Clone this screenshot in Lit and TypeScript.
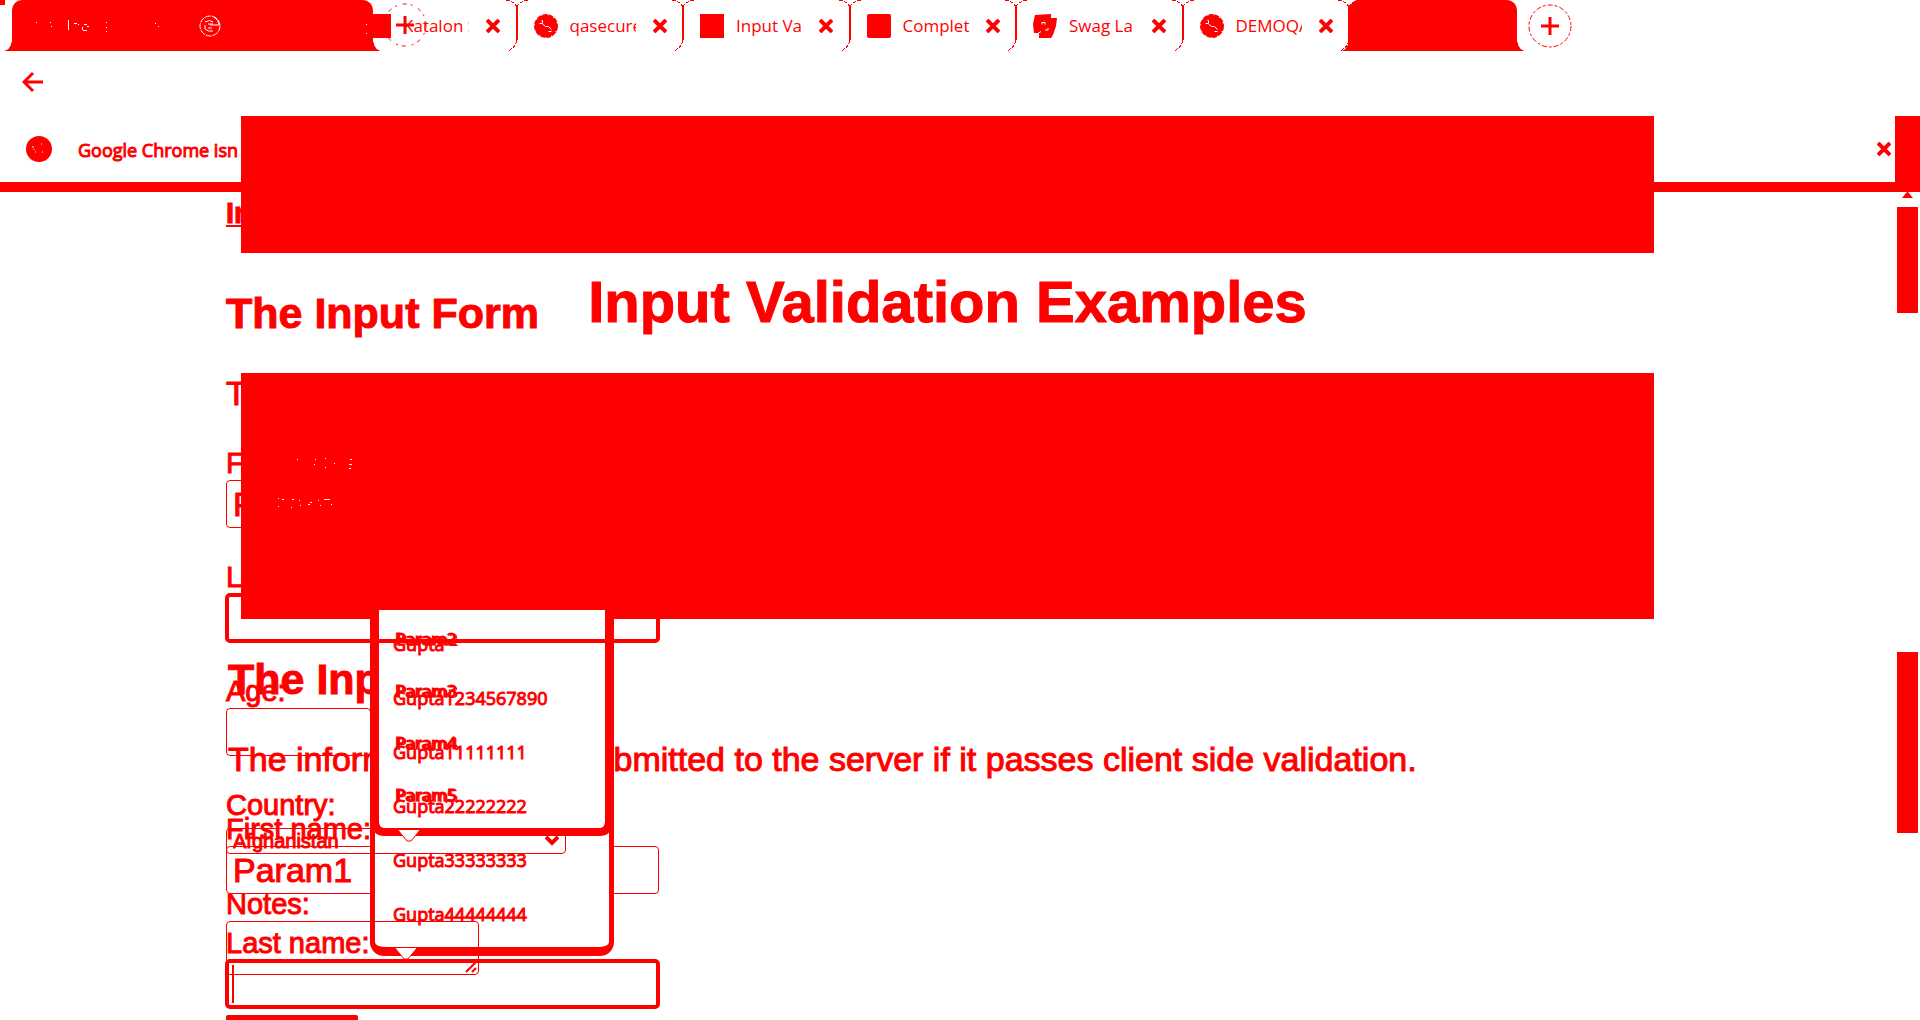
import { LitElement, html, css, svg } from "lit";
import { customElement, property } from "lit/decorators.js";

type TabIcon = "globe" | "square" | "round" | "swag";

const RED = "#ff0000";

const iconArt = (kind: TabIcon) => {
  switch (kind) {
    case "square":
      return svg`<rect width="24" height="24" fill=${RED} />`;
    case "round":
      return svg`<rect width="24" height="24" rx="2" fill=${RED} />`;
    case "swag":
      return svg`<path d="M2 1L18 0L18 4L24 4L23 12L20 21L18 24L6 24L6 19L1 19L0 10Z" fill=${RED} />
        <path d="M9 10.500v-2h3v2M15 14v2h-3M18.500 0v4M5 19.500l3-2" fill="none" stroke="#fff" />`;
    default:
      return svg`<circle cx="12" cy="12" r="11" fill=${RED} />
        <circle cx="12" cy="12" r="11" fill="none" stroke=${RED} stroke-width="2" stroke-dasharray="5 1" />
        <path d="M5.500 9.500h3v-3h-1M8.500 10l3 2.500h3l3 3M17.500 17.500h-3" fill="none" stroke="#fff" />`;
  }
};

const cross = html`<svg class="cross" viewBox="0 0 14 14" aria-hidden="true">
  <path d="M1 1L13 13M13 1L1 13" fill="none" stroke=${RED} stroke-width="4" />
</svg>`;

@customElement("browser-tab")
class BrowserTab extends LitElement {
  static styles = css`
    :host {
      position: relative;
      display: flex;
      flex: 1;
      align-items: center;
      min-width: 0;
      padding-left: 17px;
      box-sizing: border-box;
    }
    .icon {
      flex: none;
      width: 24px;
      height: 24px;
      margin-right: 12px;
      overflow: visible;
    }
    .title {
      flex: none;
      width: 66px;
      overflow: hidden;
      white-space: nowrap;
      margin-right: 17px;
    }
    .close {
      flex: none;
      display: flex;
      padding: 0;
      border: 0;
      background: none;
    }
    .cross {
      width: 14px;
      height: 14px;
    }
    .edge {
      position: absolute;
      right: -11px;
      top: 0;
      width: 22px;
      height: 51px;
    }
  `;

  @property() label = "";
  @property() icon: TabIcon = "globe";

  render() {
    return html`
      <svg class="icon" viewBox="0 0 24 24" aria-hidden="true">${iconArt(this.icon)}</svg>
      <span class="title">${this.label}</span>
      <button class="close" aria-label="Close tab">${cross}</button>
      <svg class="edge" viewBox="0 0 22 51" aria-hidden="true">
        <path d="M0 0Q8 1 11 7M11 40Q10 47 2 51M22 0Q14 1 11 7" fill="none" stroke=${RED}
          stroke-dasharray="4 1" shape-rendering="crispEdges" />
        <path d="M11 7V40" stroke=${RED} stroke-width="2" shape-rendering="crispEdges" />
      </svg>
    `;
  }
}

@customElement("app-root")
class AppRoot extends LitElement {
  static styles = css`
    :host {
      position: relative;
      display: flex;
      flex-direction: column;
      height: 100vh;
      overflow: hidden;
      background: #fff;
      color: #f00;
      font-family: "Liberation Sans", Arial, sans-serif;
      font-size: 29px;
    }
    .ui {
      font-family: "Open Sans", "Noto Sans", sans-serif;
    }
    .strip {
      display: flex;
      flex: none;
      height: 51px;
      font-size: 17px;
    }
    .solid {
      position: relative;
      flex: none;
      width: 168px;
      background: #f00;
      border-radius: 10px 10px 0 0;
    }
    .solid.wide {
      width: 361px;
      margin-left: 12px;
      margin-right: -23px;
    }
    .solid::before,
    .solid::after {
      content: "";
      position: absolute;
      bottom: 0;
      width: 8px;
      height: 12px;
    }
    .solid::before {
      right: 100%;
      background: radial-gradient(8px 12px at 0 0, transparent 96%, #f00 100%);
    }
    .solid::after {
      left: 100%;
      background: radial-gradient(8px 12px at 100% 0, transparent 96%, #f00 100%);
    }
    .specks {
      position: absolute;
      inset: 0;
      width: 361px;
      height: 51px;
    }
    .tabs {
      display: flex;
      width: 999px;
    }
    .add {
      display: flex;
      align-self: center;
      padding: 0;
      border: 0;
      background: none;
      margin-left: 11px;
    }
    .add.ghost {
      position: absolute;
      left: 383px;
      top: 3px;
      margin: 0;
    }
    .add svg {
      width: 44px;
      height: 44px;
    }
    .corner {
      position: absolute;
      left: 0;
      top: 0;
      width: 5px;
      height: 5px;
      background: #f00;
    }
    .toolbar {
      display: flex;
      flex: none;
      align-items: center;
      height: 62px;
      padding: 0 22px 3px;
    }
    .back,
    .dismiss {
      display: flex;
      padding: 0;
      border: 0;
      background: none;
    }
    .back svg {
      width: 22px;
      height: 22px;
    }
    .info {
      display: flex;
      flex: none;
      align-items: center;
      height: 66px;
      padding-left: 26px;
      border-bottom: 10px solid #f00;
      font-size: 18px;
      -webkit-text-stroke: 1px #f00;
    }
    .info .logo {
      width: 26px;
      height: 26px;
      margin-right: 26px;
    }
    .info .message {
      flex: 1;
      padding-top: 2px;
    }
    .info .cross {
      width: 14px;
      height: 14px;
      margin-right: 4px;
    }
    .endcap {
      align-self: stretch;
      width: 25px;
      background: #f00;
    }
    .page {
      display: grid;
      flex: 1;
      min-height: 0;
      overflow: hidden;
      padding-left: 226px;
      align-items: start;
    }
    .layer {
      grid-area: 1 / 1;
      display: flex;
      flex-direction: column;
      align-items: flex-start;
    }
    .front {
      position: relative;
      z-index: 2;
    }
    h1,
    h2,
    p {
      margin: 0;
    }
    h1,
    h2,
    p,
    label,
    input,
    .crumb {
      -webkit-text-stroke: 1px #f00;
    }
    h2 {
      font-size: 43px;
      line-height: 50px;
      margin-bottom: 35px;
    }
    p {
      font-size: 34px;
      line-height: 40px;
      margin-bottom: 33px;
      white-space: nowrap;
    }
    .back-layer h2,
    .back-layer p {
      padding-left: 2px;
    }
    label {
      line-height: 34px;
    }
    .crumb {
      font-weight: bold;
      line-height: 34px;
      color: #f00;
      margin-top: 4px;
      margin-bottom: 58px;
    }
    .back-layer {
      padding-top: 462px;
    }
    input,
    select,
    textarea {
      box-sizing: border-box;
      margin: 0;
      border: 1px solid #f00;
      border-radius: 4px;
      background: transparent;
      color: #f00;
      font-family: inherit;
      outline: none;
    }
    input {
      width: 433px;
      height: 48px;
      padding: 0 6px;
      font-size: 34px;
    }
    input.focus {
      width: 435px;
      height: 50px;
      margin: -1px;
      border-width: 4px;
      border-radius: 5px;
    }
    input.short {
      width: 145px;
    }
    .slot {
      display: grid;
    }
    .slot > * {
      grid-area: 1 / 1;
    }
    .caret {
      width: 2px;
      height: 38px;
      margin: 5px 6px;
      background: #f00;
    }
    select {
      appearance: none;
      width: 340px;
      height: 26px;
      padding: 0 6px;
      font-size: 20px;
      line-height: 24px;
      -webkit-text-stroke: 1px #f00;
    }
    .pick {
      align-items: center;
      padding: 6px 0 1px;
    }
    .pick svg {
      justify-self: end;
      width: 14px;
      height: 10px;
      margin-right: 7px;
      pointer-events: none;
    }
    textarea {
      display: block;
      width: 253px;
      height: 54px;
      resize: none;
    }
    .area svg {
      place-self: end;
      width: 12px;
      height: 12px;
      margin: 2px;
    }
    .submit {
      width: 132px;
      height: 40px;
      margin-top: 8px;
      border: 0;
      border-radius: 2px;
      background: #f00;
    }
    .gap {
      margin-bottom: 32px;
    }
    .block {
      position: absolute;
      left: 241px;
      right: 266px;
      background: #f00;
    }
    .block.top {
      top: 116px;
      height: 137px;
      z-index: 3;
    }
    .block.body {
      top: 373px;
      height: 246px;
    }
    h1 {
      position: absolute;
      top: 269px;
      left: 241px;
      right: 266px;
      text-align: center;
      font-size: 58px;
      line-height: 66px;
      white-space: nowrap;
    }
    .popup {
      position: absolute;
      left: 370px;
      top: 610px;
      box-sizing: border-box;
      width: 244px;
      margin: 0;
      list-style: none;
      border: solid #f00;
      border-radius: 0 0 14px 14px;
      -webkit-text-stroke: 1px #f00;
    }
    .popup.tall {
      height: 346px;
      padding: 7px 0 0 18px;
      background: #fff;
      border-width: 0 5px 9px;
      font-size: 18px;
      line-height: 54px;
    }
    .popup.small {
      height: 226px;
      padding: 3px 0 0 16px;
      border-width: 0 9px 8px;
      font-size: 17px;
      line-height: 52px;
      text-shadow: 1px 0 #f00, 2px 1px #f00;
    }
    .tip {
      position: absolute;
      width: 22px;
      height: 13px;
    }
    .tip.a {
      left: 398px;
      top: 830px;
    }
    .tip.b {
      left: 395px;
      top: 948px;
    }
    .up {
      position: absolute;
      right: 7px;
      top: 192px;
      width: 11px;
      height: 6px;
    }
    .thumb {
      position: absolute;
      right: 2px;
      width: 21px;
      background: #f00;
    }
    .thumb.first {
      top: 207px;
      height: 106px;
    }
    .thumb.second {
      top: 652px;
      height: 181px;
    }
    .whisper {
      position: absolute;
      left: 274px;
      top: 455px;
      width: 80px;
      height: 60px;
      z-index: 3;
    }
  `;

  private tabs: { label: string; icon: TabIcon }[] = [
    { label: "Katalon S", icon: "square" },
    { label: "qasecure", icon: "globe" },
    { label: "Input Va", icon: "square" },
    { label: "Complet", icon: "round" },
    { label: "Swag La", icon: "swag" },
    { label: "DEMOQA", icon: "globe" },
  ];

  private lastNames = [
    "Gupta",
    "Gupta1234567890",
    "Gupta11111111",
    "Gupta22222222",
    "Gupta33333333",
    "Gupta44444444",
  ];

  private firstNames = ["Param2", "Param3", "Param4", "Param5"];

  private plus(ghost = false) {
    return html`<button class=${ghost ? "add ghost" : "add"} aria-label="New tab">
      <svg viewBox="0 0 44 44" aria-hidden="true">
        <circle cx="22" cy="22" r="21" fill="none" stroke=${RED} stroke-dasharray=${ghost ? "4 4 2 6" : "5 2 3 2"} />
        <path d="M13 22H31M22 13V31" stroke=${RED} stroke-width="3" />
      </svg>
    </button>`;
  }

  private tip(place: string) {
    return html`<svg class="tip ${place}" viewBox="0 0 22 13" aria-hidden="true">
      <path d="M0 0H22L13 11H9Z" fill="#fff" />
      <path d="M0 0L9 11H13L22 0" fill="none" stroke=${RED} />
    </svg>`;
  }

  render() {
    return html`
      <header class="strip ui">
        <div class="solid wide">
          <svg class="specks" viewBox="0 0 361 51" aria-hidden="true">
            <path
              d="M24 22.500h1M38 22.500h1M39 26.500h1M56.500 20v10M62 23.500h3M66 24.500h1M71 30.500h4M70.500 27v3M72 24.500h3M75 26.500h2M94 22.500h1M94 27.500h1M94 31.500h1M143 23.500h1M146 26.500h1M355 20.500h3M354 24.500h2M354 33.500h4"
              fill="none" stroke="#fff" shape-rendering="crispEdges" />
            <circle cx="198" cy="26" r="10" fill="none" stroke="#fff" stroke-dasharray="6 1" />
            <path d="M202 17q5 3 5 8h-9M193 22q5-3 8 0M193 25v4q3 3 8 2M196 24h5M196 28h4" fill="none" stroke="#fff" />
          </svg>
        </div>
        <nav class="tabs">
          ${this.tabs.map((t) => html`<browser-tab .label=${t.label} .icon=${t.icon}></browser-tab>`)}
        </nav>
        <div class="solid"></div>
        ${this.plus()}
      </header>
      ${this.plus(true)}
      <span class="corner"></span>

      <div class="toolbar">
        <button class="back" aria-label="Back">
          <svg viewBox="0 0 22 22" aria-hidden="true">
            <path d="M21 11H3M11 2L2 11L11 20" fill="none" stroke=${RED} stroke-width="3" />
          </svg>
        </button>
      </div>

      <div class="info ui">
        <svg class="logo" viewBox="0 0 26 26" aria-hidden="true">
          <circle cx="13" cy="13" r="13" fill=${RED} />
          <path d="M7 10v2M8 13v1M15 8h1M16 16h1M9 16h1" stroke="#fff" />
        </svg>
        <span class="message">Google Chrome isn</span>
        <button class="dismiss" aria-label="Dismiss">${cross}</button>
        <span class="endcap"></span>
      </div>

      <main class="page">
        <form class="layer back-layer">
          <h2>The Input Form</h2>
          <p>The information will be submitted to the server if it passes client side validation.</p>
          <label for="first-b">First name:</label>
          <input class="gap" id="first-b" value="Param1" />
          <label for="last-b">Last name:</label>
          <div class="slot"><input class="focus" id="last-b" /><i class="caret"></i></div>
        </form>

        <form class="layer front">
          <a class="crumb" href="#">Input</a>
          <h2>The Input Form</h2>
          <p>The information</p>
          <label for="first">First name:</label>
          <input class="gap" id="first" value="Param1" />
          <label for="last">Last name:</label>
          <div class="slot gap"><input class="focus" id="last" /></div>
          <label for="age">Age:</label>
          <input class="short gap" id="age" />
          <label for="country">Country:</label>
          <div class="slot pick gap">
            <select id="country"><option>Afghanistan</option></select>
            <svg viewBox="0 0 14 10" aria-hidden="true">
              <path d="M1 1L7 7L13 1" fill="none" stroke=${RED} stroke-width="4" />
            </svg>
          </div>
          <label for="notes">Notes:</label>
          <div class="slot area gap">
            <textarea id="notes"></textarea>
            <svg viewBox="0 0 12 12" aria-hidden="true">
              <path d="M1 11L11 1M7 11L11 7" stroke=${RED} stroke-width="2" />
            </svg>
          </div>
          <button class="submit" aria-label="Submit"></button>
        </form>
      </main>

      <h1>Input Validation Examples</h1>
      <div class="block top"></div>
      <div class="block body"></div>
      <svg class="whisper" viewBox="0 0 80 60" aria-hidden="true">
        <path
          d="M23 4.500h1M41 4.500h1M40 9.500h1M51 3.500h1M51 12.500h1M60 8.500h1M76 4.500h2M75 9.500h3M75 13.500h2M4 43.500h1M8 44.500h2M4 51.500h1M18 44.500h2M25 45.500h1M17 52.500h1M26 50.500h1M34 49.500h2M36 47.500h2M44 45.500h1M46 50.500h1M50 44.500h6M57 49.500h1"
          fill="none" stroke="#fff" shape-rendering="crispEdges" />
      </svg>
      <ul class="popup tall ui">
        ${this.lastNames.map((n) => html`<li>${n}</li>`)}
      </ul>
      <ul class="popup small ui">
        ${this.firstNames.map((n) => html`<li>${n}</li>`)}
      </ul>
      ${this.tip("a")} ${this.tip("b")}

      <svg class="up" viewBox="0 0 11 6" aria-hidden="true"><path d="M0 6L5 0H6L11 6Z" fill=${RED} /></svg>
      <span class="thumb first"></span>
      <span class="thumb second"></span>
    `;
  }
}
